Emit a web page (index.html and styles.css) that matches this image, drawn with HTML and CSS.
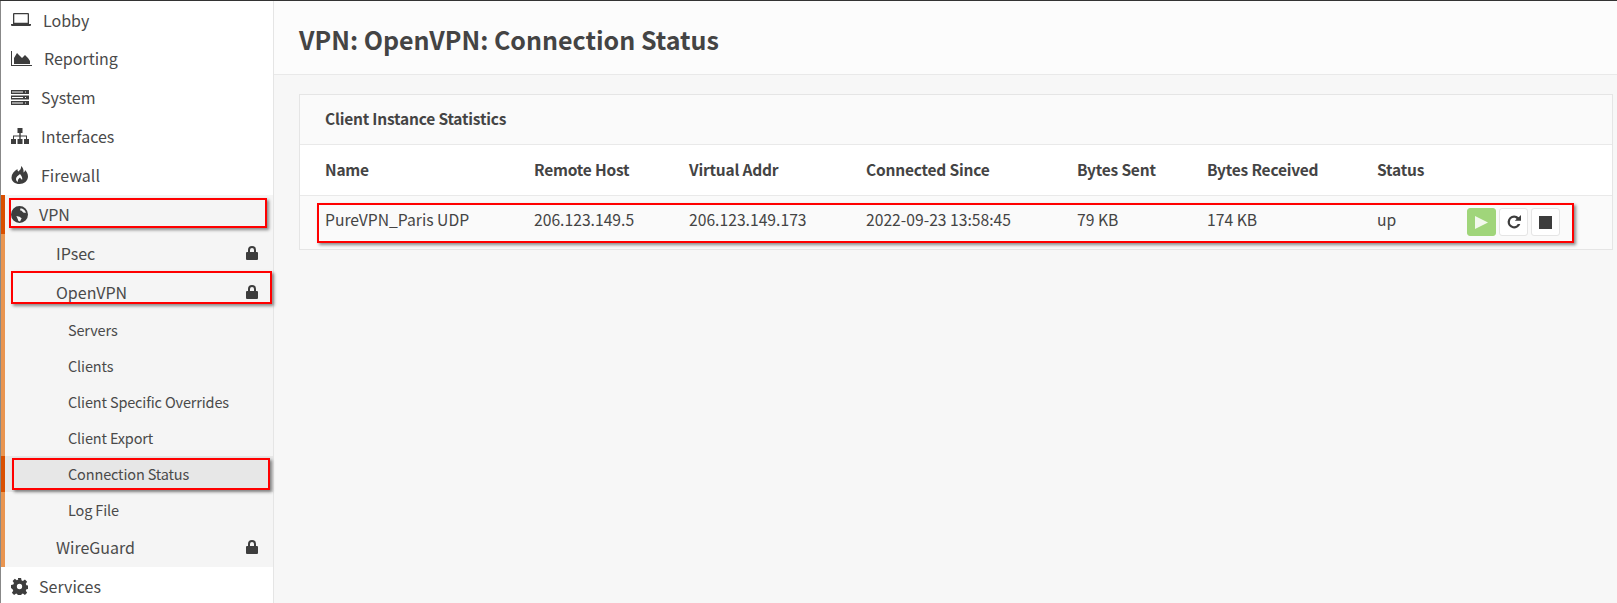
FILE: index.html
```html
<!DOCTYPE html>
<html lang="en">
<head>
    <meta charset="UTF-8">
    <meta name="viewport" content="width=device-width, initial-scale=1.0">
    <title>VPN: OpenVPN: Connection Status</title>
    <link rel="stylesheet" href="styles.css">
</head>
<body>
    <div id="page">
        <nav id="sidebar">
            <a class="item first"><svg class="icon i-lobby" viewBox="0 0 20 13"><path fill-rule="evenodd" d="M3 0h14a1 1 0 0 1 1 1v10H2V1a1 1 0 0 1 1-1zm.3 1.300v8.400h13.400V1.300zM0 11h20v1a1 1 0 0 1-1 1H1a1 1 0 0 1-1-1z"/></svg><span>Lobby</span></a>
            <a class="item"><svg class="icon i-reporting" viewBox="0 0 21 15"><path d="M0 0h1v14h20v1H0z"/><path d="M3 13V7l3-5 3 3 2 2 3-3 3 3 2 3v3z"/></svg><span>Reporting</span></a>
            <a class="item"><svg class="icon i-system" viewBox="0 0 18 15"><path fill-rule="evenodd" d="M0 0h18v4H0zm1 1.500v1h11v-1zm13 0v1h1v-1zM0 5.500h18v4H0zM1 7v1h11V7zm13 0v1h1V7zM0 11h18v4H0zm1 1.500v1h11v-1zm13 0v1h1v-1z"/></svg><span>System</span></a>
            <a class="item"><svg class="icon i-interfaces" viewBox="0 0 18 16"><path d="M6.500 0h5v5H9.700v2.500H16V11h2v5h-5v-5h2V8.500H9.700V11h1.800v5h-5v-5h1.800V8.500H3V11h2v5H0v-5h2V7.500h6.300V5H6.500z"/></svg><span>Interfaces</span></a>
            <a class="item"><svg class="icon i-firewall" viewBox="0 0 18 18"><path fill-rule="evenodd" d="M10 0c.5 2.500-1 4-2.500 5.500C6.500 4.800 6.300 4 6.500 3 3 5 .5 8 .5 11.500.5 15.500 4 18 8.500 18c4.500 0 8.500-3 8.500-7.500 0-3-1.500-5-3-6.500 0 1.200-.5 2-1.500 2.500C13 4 12 1.500 10 0zM9 8c-2 1.500-4 3-4 5 0 1.500 1 2.500 2 3-.5-1.500 0-3 2-4.500.5 1 1.500 1.500 2 2.500.5-1 .5-3-2-6z"/></svg><span>Firewall</span></a>
            <a class="item open"><svg class="icon i-globe" viewBox="0 0 16 16"><path fill-rule="evenodd" d="M8 0a8 8 0 1 1 0 16A8 8 0 0 1 8 0zm1 2.200c2.500.3 4.500 2 5 4.300L11.500 6 10 4.500l-1.500-.5zM5 9.500l3 .5 2 1.500-1.500 3-1.500-.5-1-2.500z"/></svg><span class="vpn">VPN</span></a>
            <div class="submenu">
                <a class="item sub">IPsec<svg class="lock" viewBox="0 0 12 14"><path fill-rule="evenodd" d="M2 6V4a4 4 0 0 1 8 0v2h1a1 1 0 0 1 1 1v6a1 1 0 0 1-1 1H1a1 1 0 0 1-1-1V7a1 1 0 0 1 1-1zm2 0h4V4a2 2 0 0 0-4 0z"/></svg></a>
                <a class="item sub">OpenVPN<svg class="lock" viewBox="0 0 12 14"><path fill-rule="evenodd" d="M2 6V4a4 4 0 0 1 8 0v2h1a1 1 0 0 1 1 1v6a1 1 0 0 1-1 1H1a1 1 0 0 1-1-1V7a1 1 0 0 1 1-1zm2 0h4V4a2 2 0 0 0-4 0z"/></svg></a>
                <a class="item leaf">Servers</a>
                <a class="item leaf">Clients</a>
                <a class="item leaf">Client Specific Overrides</a>
                <a class="item leaf">Client Export</a>
                <a class="item leaf current">Connection Status</a>
                <a class="item leaf">Log File</a>
                <a class="item sub">WireGuard<svg class="lock" viewBox="0 0 12 14"><path fill-rule="evenodd" d="M2 6V4a4 4 0 0 1 8 0v2h1a1 1 0 0 1 1 1v6a1 1 0 0 1-1 1H1a1 1 0 0 1-1-1V7a1 1 0 0 1 1-1zm2 0h4V4a2 2 0 0 0-4 0z"/></svg></a>
            </div>
            <a class="item"><svg class="icon i-gear" viewBox="0 0 16 16"><path fill-rule="evenodd" d="M6.500 0h3l.4 2.200 1.300.6 1.900-1.300 2.100 2.100-1.300 1.900.6 1.300 2.200.4v3l-2.200.4-.6 1.300 1.300 1.900-2.100 2.100-1.900-1.300-1.300.6-.4 2.200h-3l-.4-2.200-1.300-.6-1.900 1.300-2.100-2.100 1.300-1.900-.6-1.300L0 9.500v-3l2.200-.4.6-1.300-1.300-1.900 2.100-2.100 1.900 1.300 1.300-.6zM8 5.500a2.500 2.500 0 1 0 0 5 2.500 2.500 0 0 0 0-5z"/></svg><span class="services">Services</span></a>
        </nav>

        <main id="content">
            <header id="page-head">
                <h1>VPN: OpenVPN: Connection Status</h1>
            </header>
            <section id="stats">
                <h2>Client Instance Statistics</h2>
                <table>
                    <thead>
                        <tr>
                            <th class="c-name">Name</th>
                            <th class="c-remote">Remote Host</th>
                            <th class="c-virtual">Virtual Addr</th>
                            <th class="c-since">Connected Since</th>
                            <th class="c-sent">Bytes Sent</th>
                            <th class="c-recv">Bytes Received</th>
                            <th class="c-status">Status</th>
                            <th></th>
                        </tr>
                    </thead>
                    <tbody>
                        <tr>
                            <td>PureVPN_Paris UDP</td>
                            <td>206.123.149.5</td>
                            <td>206.123.149.173</td>
                            <td>2022-09-23 13:58:45</td>
                            <td>79 KB</td>
                            <td>174 KB</td>
                            <td>up</td>
                            <td>
                                <div class="actions">
                                    <span class="btn play"><svg viewBox="0 0 13 13"><path d="M0 0l13 6.500L0 13z"/></svg></span>
                                    <span class="btn"><svg class="reload" viewBox="0 0 14 14"><path d="M7 .5a6.500 6.500 0 1 0 6.300 8.500h-2.500A4.200 4.200 0 1 1 7 2.800c1 0 2 .4 2.600 1.100L7.800 5.800H14V0l-2.300 2.300A6.500 6.500 0 0 0 7 .5z"/></svg></span>
                                    <span class="btn"><svg viewBox="0 0 13 13"><path d="M0 0h13v13H0z"/></svg></span>
                                </div>
                            </td>
                        </tr>
                    </tbody>
                </table>
            </section>
        </main>
    </div>

    <!-- red annotation boxes drawn over the screenshot -->
    <div class="mark m-vpn"></div>
    <div class="mark m-openvpn"></div>
    <div class="mark m-status"></div>
    <div class="mark m-row"></div>
</body>
</html>
```
FILE: styles.css
```css
* {
    box-sizing: border-box;
}

html, body {
    height: 100%;
    margin: 0;
    overflow: hidden;
}

body {
    font-family: "Noto Sans CJK SC", "Source Sans Pro", "Open Sans", sans-serif;
    font-size: 15.7px;
    color: #444;
    background-color: #f7f7f7;
    border-top: 1px solid #333;
}

#page {
    display: flex;
    height: 100%;
}

#sidebar {
    width: 274px;
    flex-shrink: 0;
    background-color: #fff;
    border-left: 1px solid #888;
    border-right: 1px solid #e5e5e5;
    font-size: 16px;
}

.item {
    display: flex;
    align-items: center;
    height: 39px;
    padding: 0 0 1px 10px;
    color: #4a4a4a;
}

.item.first {
    height: 38px;
}

.icon {
    height: 15px;
    fill: #3d3d3d;
    margin-right: 12px;
    flex-shrink: 0;
}

.i-lobby { width: 20px; height: 13px; }
.i-reporting { width: 21px; height: 15px; }
.i-system { width: 18px; height: 15px; }
.i-interfaces { width: 18px; height: 16px; }
.i-firewall { width: 18px; height: 18px; }
.i-globe { width: 17px; height: 17px; }
.i-gear { width: 17px; height: 17px; }

.vpn {
    margin-left: -1px;
}

.services {
    margin-left: -1px;
}

.open {
    background-color: #f5f5f5;
    border-left: 4px solid #d94f00;
    padding-left: 6px;
}

.submenu {
    background-color: #f5f5f5;
    border-left: 4px solid #e99550;
}

.sub {
    padding: 0 15px 2px 51px;
    justify-content: space-between;
}

.lock {
    width: 12px;
    height: 14px;
    fill: #3d3d3d;
}

.leaf {
    height: 36px;
    padding: 0 0 2px 63px;
    font-size: 14.500px;
    letter-spacing: -0.15px;
}

.current {
    background-color: #e7e7e7;
    border-left: 4px solid #d94f00;
    margin-left: -4px;
}

#content {
    flex: 1;
}

#page-head {
    height: 74px;
    background-color: #fcfcfc;
    border-bottom: 1px solid #e9e9e9;
    padding: 2px 0 0 25px;
    display: flex;
    align-items: center;
}

h1 {
    margin: 0;
    font-size: 25px;
    font-weight: 600;
}

#stats {
    margin: 19px 4px 0 25px;
    background-color: #fff;
    border: 1px solid #e5e5e5;
}

h2 {
    margin: 0;
    height: 50px;
    line-height: 46px;
    padding-left: 25px;
    font-size: 15.500px;
    font-weight: 600;
    letter-spacing: -0.2px;
    background-color: #fafafa;
    border-bottom: 1px solid #e9e9e9;
}

table {
    width: 100%;
    border-collapse: collapse;
    table-layout: fixed;
}

th {
    height: 50px;
    padding: 0 0 2px 25px;
    text-align: left;
    font-size: 15.500px;
    font-weight: 600;
    letter-spacing: -0.2px;
    border-bottom: 1px solid #e9e9e9;
}

td {
    height: 54px;
    padding: 0 0 6px 25px;
    background-color: #fafafa;
}

.c-name { width: 209px; }
.c-remote { width: 155px; }
.c-virtual { width: 177px; }
.c-since { width: 211px; }
.c-sent { width: 130px; }
.c-recv { width: 170px; }
.c-status { width: 90px; }

.actions {
    display: flex;
    gap: 3px;
    margin-top: 6px;
}

.btn {
    width: 29px;
    height: 28px;
    display: flex;
    align-items: center;
    justify-content: center;
    background-color: #fff;
    border: 1px solid #e5e5e5;
    border-radius: 3px;
}

.btn svg {
    width: 13px;
    height: 13px;
    fill: #3d3d3d;
}

.btn .reload {
    width: 14px;
    height: 14px;
}

.play {
    background-color: #a0d57a;
    border-color: #a0d57a;
}

.play svg {
    fill: #f2f8ec;
}

.mark {
    position: absolute;
    border: 2px solid #f00;
    box-shadow: 2px 2px 3px rgba(0, 0, 0, 0.45);
}

.m-vpn { left: 9px; top: 198px; width: 258px; height: 30px; }
.m-openvpn { left: 11px; top: 271px; width: 261px; height: 33px; }
.m-status { left: 12px; top: 458px; width: 258px; height: 32px; }
.m-row { left: 317px; top: 203px; width: 1257px; height: 40px; }
```
